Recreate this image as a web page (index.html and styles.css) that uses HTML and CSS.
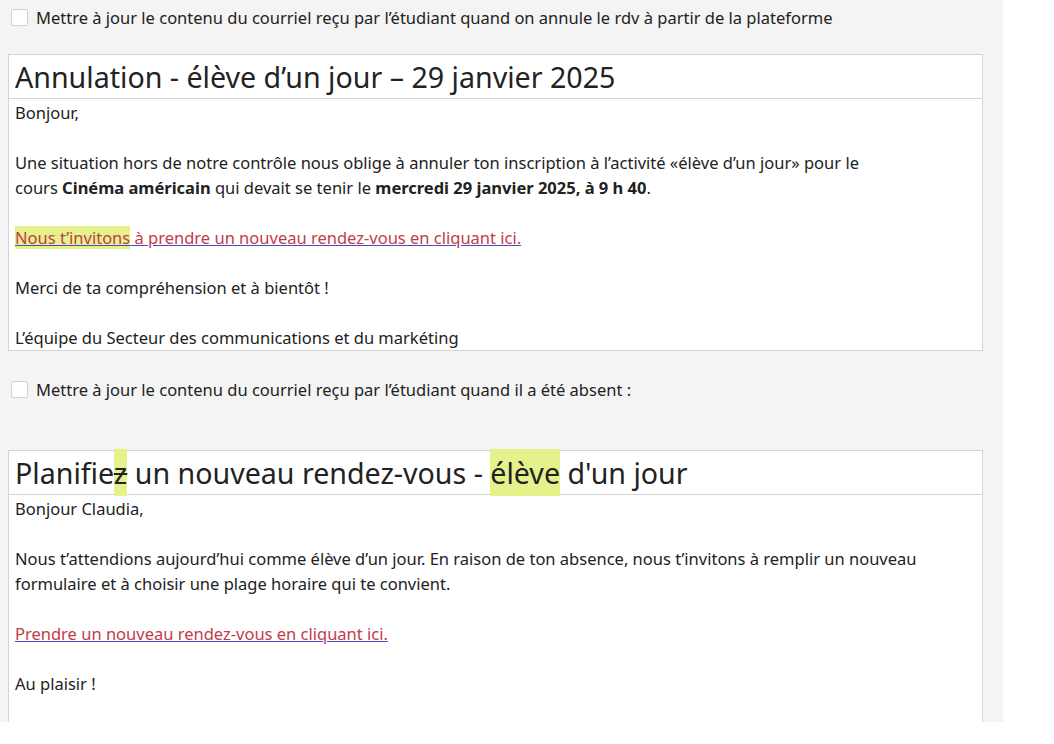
FILE: index.html
```html
<!DOCTYPE html>
<html lang="fr">
<head>
    <meta charset="UTF-8">
    <title>Courriels - élève d'un jour</title>
    <link rel="stylesheet" href="styles.css">
</head>
<body>
    <div class="panel">
        <label class="check-row">
            <span class="checkbox"></span>
            Mettre à jour le contenu du courriel reçu par l’étudiant quand on annule le rdv à partir de la plateforme
        </label>

        <div class="mail-box first">
            <div class="mail-subject">Annulation - élève d’un jour – 29 janvier 2025</div>
            <div class="mail-body">
                <p>Bonjour,</p>
                <p>Une situation hors de notre contrôle nous oblige à annuler ton inscription à l’activité «élève d’un jour» pour le<br>cours <b>Cinéma américain</b> qui devait se tenir le <b>mercredi 29 janvier 2025, à 9 h 40</b>.</p>
                <p><a href="#"><mark>Nous t’invitons</mark> à prendre un nouveau rendez-vous en cliquant ici.</a></p>
                <p>Merci de ta compréhension et à bientôt !</p>
                <p>L’équipe du Secteur des communications et du markéting</p>
            </div>
        </div>

        <label class="check-row second">
            <span class="checkbox"></span>
            Mettre à jour le contenu du courriel reçu par l’étudiant quand il a été absent :
        </label>

        <div class="mail-box last">
            <div class="mail-subject">Planifie<mark class="title-mark strike">z</mark> un nouveau rendez-vous - <mark class="title-mark">élève</mark> d'un jour</div>
            <div class="mail-body">
                <p>Bonjour Claudia,</p>
                <p>Nous t’attendions aujourd’hui comme élève d’un jour. En raison de ton absence, nous t’invitons à remplir un nouveau<br>formulaire et à choisir une plage horaire qui te convient.</p>
                <p><a href="#">Prendre un nouveau rendez-vous en cliquant ici.</a></p>
                <p>Au plaisir !</p>
            </div>
        </div>
    </div>
</body>
</html>
```

FILE: styles.css
```css
* {
    margin: 0;
    padding: 0;
    box-sizing: border-box;
}

body {
    background: #fff;
    font-family: 'Noto Sans', 'Open Sans', sans-serif;
    color: #222;
}

.panel {
    width: 1003px;
    height: 722px;
    overflow: hidden;
    background: #f4f4f4;
    padding: 5px 20px 0 8px;
}

.check-row {
    display: flex;
    align-items: center;
    gap: 8px;
    font-size: 16.5px;
    line-height: 25px;
    color: #222;
    padding-left: 3px;
}

.check-row.second {
    margin-top: 26px;
}

.checkbox {
    width: 17px;
    height: 17px;
    background: #fff;
    border: 1px solid #d0d0d0;
    border-radius: 2px;
    flex-shrink: 0;
}

.mail-box {
    background: #fff;
    border: 1px solid #d4d4d4;
    margin-top: 24px;
}

.mail-box.last {
    margin-top: 48px;
    height: 300px;
}

.mail-subject {
    font-size: 28.6px;
    line-height: 43px;
    padding: 0 6px;
    border-bottom: 1px solid #d4d4d4;
    white-space: nowrap;
}

.mail-body {
    padding: 1px 6px 0;
    font-size: 16.5px;
    line-height: 25px;
}

.mail-body p + p {
    margin-top: 25px;
}

.mail-body b {
    font-weight: 700;
}

.mail-body a {
    color: #c23b4b;
    text-decoration: underline;
    text-decoration-color: #4a4ac2;
}

mark {
    background: #e5f28b;
    color: inherit;
}

.mail-body mark {
    text-decoration-color: #c23b4b;
}

.title-mark {
    padding: 4px 0;
}

.strike {
    text-decoration: line-through;
    text-decoration-thickness: 2px;
}
```
